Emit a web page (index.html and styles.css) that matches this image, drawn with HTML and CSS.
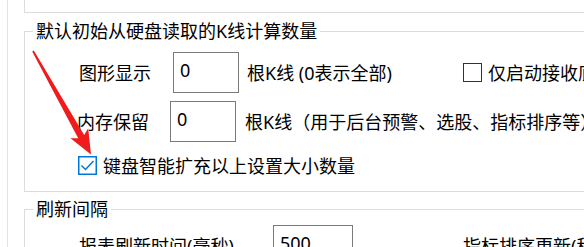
FILE: index.html
```html
<!DOCTYPE html>
<html lang="zh-CN">
<head>
<meta charset="utf-8">
<title>设置</title>
<link rel="stylesheet" href="styles.css">
</head>
<body>
<div class="page">
  <div class="panel">
    <div class="prev-group"></div>

    <fieldset class="group group-kline">
      <legend>默认初始从硬盘读取的K线计算数量</legend>
      <div class="row row-graph">
        <span class="label label-graph">图形显示</span>
        <input class="field field-short" type="text" value="0">
        <span class="unit unit-graph">根K线 (0表示全部)</span>
        <label class="check">
          <span class="box"></span>
          <span class="check-text">仅启动接收底层数据</span>
        </label>
      </div>
      <div class="row row-memory">
        <span class="label label-memory">内存保留</span>
        <input class="field field-short" type="text" value="0">
        <span class="unit unit-memory">根K线（用于后台预警、选股、指标排序等）</span>
      </div>
      <div class="row row-smart">
        <label class="check">
          <svg class="box-checked" viewBox="0 0 19 19" width="19" height="19" aria-hidden="true">
            <rect x="0.75" y="0.75" width="17.5" height="17.5" fill="#fff" stroke="#0078d7" stroke-width="1.5"/>
            <polyline points="3.5,9.5 7.5,13.5 15.5,5" fill="none" stroke="#0078d7" stroke-width="1.5"/>
          </svg>
          <span class="check-text">键盘智能扩充以上设置大小数量</span>
        </label>
      </div>
    </fieldset>

    <fieldset class="group group-refresh">
      <legend>刷新间隔</legend>
      <div class="row row-report">
        <span class="label label-report">报表刷新时间(毫秒)</span>
        <input class="field field-long" type="text" value="500">
        <span class="unit unit-sort">指标排序更新(秒)</span>
      </div>
    </fieldset>
  </div>

  <svg class="arrow" viewBox="0 0 584 247" width="584" height="247" aria-hidden="true">
    <polygon points="32.2,51.4 78.2,138.3 70.5,138.3 91,154.5 88.2,128.2 84.2,134.9 33.8,50.6" fill="#ee1c1c"/>
  </svg>
</div>
</body>
</html>
```

FILE: styles.css
```css
html, body {
  margin: 0;
  padding: 0;
  background: #ffffff;
  overflow: hidden;
}

.page {
  position: relative;
  width: 584px;
  height: 247px;
  overflow: hidden;
  background: #ffffff;
  font-family: "Noto Sans", "Noto Sans CJK SC", sans-serif;
  font-size: 18px;
  color: #000000;
}

.panel {
  margin-left: 7px;
  border-left: 1px solid #e4e4e4;
  padding-left: 16px;
  width: 720px;
  height: 247px;
  white-space: nowrap;
}

.prev-group {
  height: 12px;
  border-left: 1px solid #dcdcdc;
  border-bottom: 1px solid #dcdcdc;
}

.group {
  margin: 6px 0 0 0;
  border: 1px solid #dcdcdc;
  padding: 9px 0 16px 0;
  min-width: 0;
}

.group legend {
  margin-left: 8px;
  padding: 0 3px;
  line-height: 24px;
  height: 24px;
}

.group-refresh {
  margin-top: 5px;
  padding-top: 4px;
}

.row {
  display: flex;
  align-items: center;
  height: 41px;
  line-height: 24px;
}

.row-graph { padding-left: 54px; }
.row-memory { padding-left: 52px; margin-top: 8px; }
.row-smart { padding-left: 53px; margin-top: 14px; height: 19px; }
.row-report { padding-left: 54px; }

.label-graph { width: 94px; }
.label-memory { width: 93px; }
.label-report { width: 194px; }

.field {
  box-sizing: border-box;
  height: 41px;
  margin: 0;
  border: 1px solid #7a7a7a;
  border-radius: 0;
  padding: 2px 6px 8px 6px;
  font: inherit;
  line-height: 24px;
  color: #000000;
  background: #ffffff;
  outline: none;
}

.field-short { width: 66px; }
.field-long { width: 80px; }

.unit-graph { margin-left: 8px; width: 216px; }
.unit-memory { margin-left: 9px; }
.unit-sort { margin-left: 110px; }

.check {
  display: flex;
  align-items: center;
}

.box {
  box-sizing: border-box;
  width: 19px;
  height: 19px;
  border: 1.5px solid #333333;
  background: #ffffff;
}

.box-checked {
  display: block;
}

.check-text {
  margin-left: 6px;
}

.arrow {
  position: absolute;
  left: 0;
  top: 0;
  pointer-events: none;
}
```
